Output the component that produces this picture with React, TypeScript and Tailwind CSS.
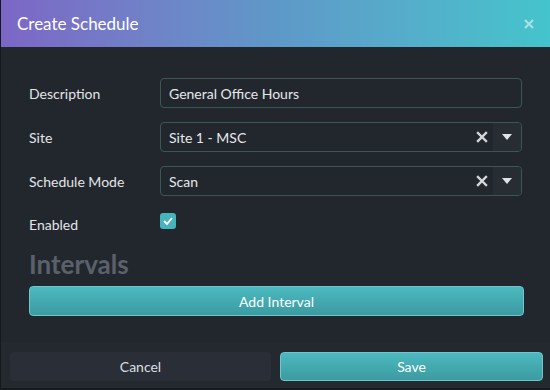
import React from "react";

const font = { fontFamily: '"Segoe UI", Lato, "Noto Sans", sans-serif' };

function Select({ value }: { value: string }) {
  return (
    <div className="flex h-[30px] w-[362px] items-stretch overflow-hidden rounded-[4px] border border-[#3b5755] bg-[#22272e]">
      <div className="flex flex-1 items-center pl-[8px] text-[14px] text-[#e6e8ea]">{value}</div>
      <div className="flex w-[22px] items-center justify-center">
        <svg width="12" height="12" viewBox="0 0 12 12">
          <path d="M2 2 L10 10 M10 2 L2 10" stroke="#d5d7da" strokeWidth="2.4" strokeLinecap="square" />
        </svg>
      </div>
      <div className="flex w-[28px] items-center justify-center bg-[#282d34]">
        <svg width="10" height="6" viewBox="0 0 10 6">
          <path d="M0 0 L10 0 L5 6 Z" fill="#e0e2e5" />
        </svg>
      </div>
    </div>
  );
}

function Row({ label, children }: { label: string; children: React.ReactNode }) {
  return (
    <div className="flex items-center">
      <div className="w-[131px] text-[14px] text-[#e3e5e8]">{label}</div>
      {children}
    </div>
  );
}

export default function App() {
  return (
    <div style={font} className="flex h-[390px] w-[550px] flex-col border-l border-[#15181c] bg-[#22272e]">
      <div className="flex h-[47px] shrink-0 items-center justify-between bg-gradient-to-r from-[#7c66c6] via-[#5e98c8] to-[#44c4cc] pl-[16px] pr-[16px]">
        <span className="text-[17px] text-white">Create Schedule</span>
        <svg width="10" height="10" viewBox="0 0 10 10" className="mt-[1px]">
          <path d="M1 1 L9 9 M9 1 L1 9" stroke="#a9e3e6" strokeWidth="2" />
        </svg>
      </div>
      <div className="flex flex-1 flex-col px-[28px] pt-[31px]">
        <div className="flex flex-col gap-[14px]">
          <Row label="Description">
            <div className="flex h-[30px] w-[362px] items-center rounded-[4px] border border-[#3b5755] bg-[#22272e] pl-[8px] text-[14px] text-[#e6e8ea]">
              General Office Hours
            </div>
          </Row>
          <Row label="Site">
            <Select value="Site 1 - MSC" />
          </Row>
          <Row label="Schedule Mode">
            <Select value="Scan" />
          </Row>
        </div>
        <div className="mt-[17px] flex items-start">
          <div className="w-[131px] pt-[1px] text-[14px] text-[#e3e5e8]">Enabled</div>
          <div className="flex h-[16px] w-[16px] items-center justify-center rounded-[3px] bg-[#47b4bc]">
            <svg width="10" height="8" viewBox="0 0 10 8">
              <path d="M1 4 L4 7 L9 1" stroke="white" strokeWidth="1.8" fill="none" />
            </svg>
          </div>
        </div>
        <div className="mt-[12px] text-[26px] font-bold leading-[34px] text-[#5b616a]">Intervals</div>
        <button className="mt-[5px] h-[30px] w-[495px] rounded-[4px] border border-[#6cc8cd] bg-gradient-to-b from-[#4cb9c0] to-[#3c9ba1] text-[14px] text-white">
          Add Interval
        </button>
      </div>
      <div className="flex h-[48px] shrink-0 gap-[9px] border-b-2 border-[#16191d] bg-[#242930] pl-[9px] pr-[7px] pt-[10px]">
        <button className="h-[29px] flex-1 rounded-[4px] bg-[#2a2f37] text-[14px] text-[#dcdee1]">Cancel</button>
        <button className="h-[29px] flex-1 rounded-[4px] border border-[#6cc8cd] bg-gradient-to-b from-[#4cb9c0] to-[#3c9ba1] text-[14px] text-white">
          Save
        </button>
      </div>
    </div>
  );
}
